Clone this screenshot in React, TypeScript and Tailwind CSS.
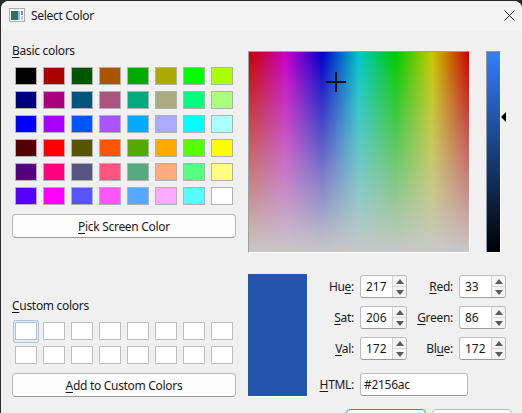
import React from 'react';

const basicColors = [
  'bg-[#000000]', 'bg-[#aa0000]', 'bg-[#005500]', 'bg-[#aa5500]', 'bg-[#00aa00]', 'bg-[#aaaa00]', 'bg-[#00ff00]', 'bg-[#aaff00]',
  'bg-[#00007f]', 'bg-[#aa007f]', 'bg-[#00557f]', 'bg-[#aa557f]', 'bg-[#00aa7f]', 'bg-[#aaaa7f]', 'bg-[#00ff7f]', 'bg-[#aaff7f]',
  'bg-[#0000ff]', 'bg-[#aa00ff]', 'bg-[#0055ff]', 'bg-[#aa55ff]', 'bg-[#00aaff]', 'bg-[#aaaaff]', 'bg-[#00ffff]', 'bg-[#aaffff]',
  'bg-[#550000]', 'bg-[#ff0000]', 'bg-[#555500]', 'bg-[#ff5500]', 'bg-[#55aa00]', 'bg-[#ffaa00]', 'bg-[#55ff00]', 'bg-[#ffff00]',
  'bg-[#55007f]', 'bg-[#ff007f]', 'bg-[#55557f]', 'bg-[#ff557f]', 'bg-[#55aa7f]', 'bg-[#ffaa7f]', 'bg-[#55ff7f]', 'bg-[#ffff7f]',
  'bg-[#5500ff]', 'bg-[#ff00ff]', 'bg-[#5555ff]', 'bg-[#ff55ff]', 'bg-[#55aaff]', 'bg-[#ffaaff]', 'bg-[#55ffff]', 'bg-[#ffffff]',
];

function Mnemonic({ before = '', letter, after = '' }: { before?: string; letter: string; after?: string }) {
  return (
    <span>
      {before}
      <span className="underline underline-offset-2 decoration-1">{letter}</span>
      {after}
    </span>
  );
}

function PushButton({ children }: { children: React.ReactNode }) {
  return (
    <button className="block h-6 w-full rounded-[4px] border border-[#b8b8b8] border-b-[#9a9a9a] bg-[#fdfdfd] pt-[2px] text-[12px] leading-none tracking-[-0.3px] text-[#1a1a1a]">
      {children}
    </button>
  );
}

function SpinBox({ value }: { value: number }) {
  return (
    <div className="flex h-[23px] w-[47px] overflow-hidden rounded-[3px] border border-[#bdbdbd] border-b-[#9a9a9a] bg-white">
      <div className="flex flex-1 items-center pl-[5px] pt-px text-[12px] text-[#1a1a1a]">{value}</div>
      <div className="flex w-[14px] flex-col border-l border-[#d4d4d4] bg-[#f4f4f4]">
        <div className="flex flex-1 items-center justify-center border-b border-[#d8d8d8]">
          <svg width="8" height="5" viewBox="0 0 8 5"><path d="M4 0 L8 5 L0 5 Z" fill="#5a5a5a" /></svg>
        </div>
        <div className="flex flex-1 items-center justify-center">
          <svg width="8" height="5" viewBox="0 0 8 5"><path d="M0 0 L8 0 L4 5 Z" fill="#5a5a5a" /></svg>
        </div>
      </div>
    </div>
  );
}

function SpinLabel({ children }: { children: React.ReactNode }) {
  return <div className="flex h-[23px] items-center justify-end pr-[6px] text-[12px] tracking-[-0.3px] text-[#1a1a1a]">{children}</div>;
}

export default function App() {
  return (
    <div className="h-[413px] w-[522px] overflow-hidden bg-[#2a2a2a] pl-px pt-px font-['Noto_Sans','Open_Sans',sans-serif]">
      <div className="h-[412px] w-[521px] overflow-hidden rounded-t-[8px] bg-[#f0f0f0]">
        {/* Title bar */}
        <div className="flex h-[30px] items-center bg-[#f3f3f3] pl-[8px] pr-[7px]">
          <svg className="mb-[2px]" width="16" height="14" viewBox="0 0 16 14">
            <rect x="0.5" y="0.5" width="15" height="13" fill="#f4f6f6" stroke="#a9adad" />
            <rect x="2" y="3" width="7" height="9" fill="#2f6f74" />
            <rect x="9" y="3" width="2" height="9" fill="#9cc0c4" />
            <rect x="12" y="3" width="2" height="4" fill="#7d8f99" />
            <rect x="12" y="8" width="2" height="4" fill="#c4ccd0" />
          </svg>
          <span className="ml-[6px] text-[12px] tracking-[-0.3px] text-[#1a1a1a]">Select Color</span>
          <svg className="mb-[2px] ml-auto" width="11" height="11" viewBox="0 0 11 11">
            <path d="M0.5 0.5 L10.5 10.5 M10.5 0.5 L0.5 10.5" stroke="#222222" strokeWidth="1" fill="none" />
          </svg>
        </div>

        <div className="flex pl-[11px] pt-[12px]">
          {/* Left column */}
          <div className="flex h-[354px] w-[224px] flex-col">
            <div className="mb-[8px] h-4 text-[12px] leading-4 tracking-[-0.3px] text-[#1a1a1a]">
              <Mnemonic letter="B" after="asic colors" />
            </div>
            <div className="ml-[3px] grid grid-cols-[repeat(8,22px)] auto-rows-[18px] gap-x-[6px] gap-y-[6px]">
              {basicColors.map((c, i) => (
                <div key={i} className={`border border-[#b0b0b0] ${c}`} />
              ))}
            </div>
            <div className="mt-[9px]">
              <PushButton>
                <Mnemonic letter="P" after="ick Screen Color" />
              </PushButton>
            </div>

            <div className="mb-[8px] mt-auto h-4 text-[12px] leading-4 tracking-[-0.3px] text-[#1a1a1a]">
              <Mnemonic letter="C" after="ustom colors" />
            </div>
            <div className="relative ml-[3px] grid grid-cols-[repeat(8,22px)] auto-rows-[18px] gap-x-[6px] gap-y-[6px]">
              <div className="absolute left-[-2px] top-[-2px] h-[23px] w-[26px] rounded-[2px] border border-[#a9c4e4] bg-[#e6eef8]" />
              {Array.from({ length: 16 }).map((_, i) => (
                <div key={i} className="relative border border-[#bcbcbc] bg-white" />
              ))}
            </div>
            <div className="mt-[9px]">
              <PushButton>
                <Mnemonic letter="A" after="dd to Custom Colors" />
              </PushButton>
            </div>
          </div>

          {/* Right column */}
          <div className="ml-[12px] flex flex-col pt-[8px]">
            <div className="flex">
              <div className="relative h-[202px] w-[222px] border-b border-r border-t border-b-white border-r-white border-t-[#a0a0a0] border-l border-l-[#a0a0a0] bg-[linear-gradient(to_bottom,rgba(200,200,200,0),#c8c8c8),linear-gradient(to_right,#c80000,#c800c8_16.7%,#0000c8_33.3%,#00c8c8_50%,#00c800_66.7%,#c8c800_83.3%,#c80000)]">
                <div className="absolute left-[77px] top-[29px] h-[2px] w-[20px] bg-[#111111]" />
                <div className="absolute left-[86px] top-[20px] h-[20px] w-[2px] bg-[#111111]" />
              </div>
              <div className="relative ml-[16px] h-[202px] w-[15px] border-b border-l border-r border-t border-b-white border-l-[#8c96a8] border-r-white border-t-[#8c96a8] bg-[linear-gradient(to_bottom,#317fff,#000000)]">
                <svg className="absolute left-[14px] top-[60px]" width="5" height="10" viewBox="0 0 5 10">
                  <path d="M5 0 L0 5 L5 10 Z" fill="#000000" />
                </svg>
              </div>
            </div>

            <div className="mt-[21px] flex">
              <div className="h-[123px] w-[60px] border-b border-r border-b-white border-r-white bg-[#2156ac]" />
              <div className="flex flex-col pt-px">
                <div className="grid grid-cols-[52px_47px_52px_47px] gap-y-[8px]">
                  <SpinLabel><Mnemonic before="Hu" letter="e" after=":" /></SpinLabel>
                  <SpinBox value={217} />
                  <SpinLabel><Mnemonic letter="R" after="ed:" /></SpinLabel>
                  <SpinBox value={33} />
                  <SpinLabel><Mnemonic letter="S" after="at:" /></SpinLabel>
                  <SpinBox value={206} />
                  <SpinLabel><Mnemonic letter="G" after="reen:" /></SpinLabel>
                  <SpinBox value={86} />
                  <SpinLabel><Mnemonic letter="V" after="al:" /></SpinLabel>
                  <SpinBox value={172} />
                  <SpinLabel><Mnemonic before="Bl" letter="u" after="e:" /></SpinLabel>
                  <SpinBox value={172} />
                </div>
                <div className="mt-[13px] flex">
                  <div className="w-[52px]">
                    <SpinLabel><Mnemonic letter="H" after="TML:" /></SpinLabel>
                  </div>
                  <div className="flex h-[23px] w-[108px] items-center rounded-[3px] border border-[#bdbdbd] border-b-[#9a9a9a] bg-white pl-[3px] text-[12px] tracking-[-0.3px] text-[#1a1a1a]">
                    #2156ac
                  </div>
                </div>
              </div>
            </div>

            <div className="mt-[12px] flex pl-[98px]">
              <div className="h-6 w-[80px] rounded-[4px] border border-[#3a8fd0] bg-[#fdfdfd]" />
              <div className="ml-[6px] h-6 w-[80px] rounded-[4px] border border-[#b8b8b8] bg-[#fdfdfd]" />
            </div>
          </div>
        </div>
      </div>
    </div>
  );
}
